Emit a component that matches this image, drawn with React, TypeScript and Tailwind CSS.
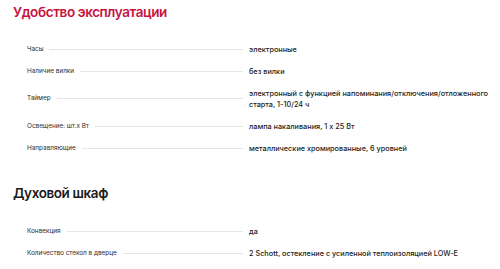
const groups = [
  {
    title: "Удобство эксплуатации",
    accent: true,
    rows: [
      ["Часы", "электронные"],
      ["Наличие вилки", "без вилки"],
      ["Таймер", "электронный с функцией напоминания/отключения/отложенного старта, 1-10/24 ч"],
      ["Освещение: шт.х Вт", "лампа накаливания, 1 х 25 Вт"],
      ["Направляющие", "металлические хромированные, 6 уровней"],
    ],
  },
  {
    title: "Духовой шкаф",
    accent: false,
    rows: [
      ["Конвекция", "да"],
      ["Количество стекол в дверце", "2 Schott, остекление с усиленной теплоизоляцией LOW-E"],
    ],
  },
];

export default function App() {
  return (
    <main
      className="w-[500px] h-[269px] overflow-hidden bg-white px-[13px] pt-[2px]"
      style={{ fontFamily: "Inter, 'Noto Sans', sans-serif" }}
    >
      {groups.map((g, gi) => (
        <section key={g.title} className={gi > 0 ? "mt-[24px]" : ""}>
          <h2
            className={
              "text-[13.5px] leading-[20px] font-semibold tracking-[-0.4px] " +
              (g.accent ? "text-[#c8123f]" : "text-[#1b1b1b]")
            }
          >
            {g.title}
          </h2>
          <div className={gi > 0 ? "mt-[17px] pl-[14px]" : "mt-[16px] pl-[14px]"}>
            {g.rows.map(([label, value]) => (
              <div key={label} className="flex items-center py-[5.5px]">
                <div className="w-[216px] flex items-center gap-[6px] shrink-0">
                  <span className="text-[6.4px] leading-[11px] text-[#2e2e2e] whitespace-nowrap">{label}</span>
                  <span className="flex-1 h-px bg-[#e6e6e6]" />
                </div>
                <div className="ml-[6px] w-[250px] shrink-0 text-[7.3px] leading-[11px] font-medium text-[#1d1d1d]">
                  {value}
                </div>
              </div>
            ))}
          </div>
        </section>
      ))}
    </main>
  );
}
